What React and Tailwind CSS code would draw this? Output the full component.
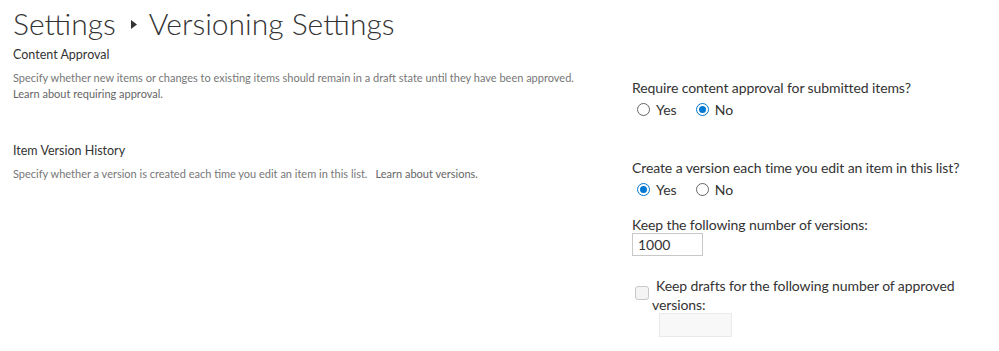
import React from "react";

const Radio = ({ checked, label }) => (
  <label className="flex items-center gap-[6px] text-[14px] text-[#333]">
    {checked ? (
      <span className="flex h-[13px] w-[13px] items-center justify-center rounded-full border border-[#0078d4]">
        <span className="h-[7px] w-[7px] rounded-full bg-[#0078d4]" />
      </span>
    ) : (
      <span className="h-[13px] w-[13px] rounded-full border border-[#666]" />
    )}
    <span>{label}</span>
  </label>
);

const SectionInfo = ({ title, children }) => (
  <div className="w-[619px] shrink-0">
    <h2 className="text-[12.5px] leading-[20px] text-[#333]">{title}</h2>
    <div className="mt-[5px] text-[11px] leading-[16px] text-[#777]">{children}</div>
  </div>
);

export default function App() {
  return (
    <div className="h-[351px] w-[999px] overflow-hidden bg-white pl-[13px] font-['Lato',sans-serif] text-[#333]">
      <h1 className="flex items-center pt-[3px] text-[30px] font-light leading-[40px] text-[#333]">
        <span>Settings</span>
        <svg className="ml-[15px] mr-[12px] mt-[2px]" width="6" height="9" viewBox="0 0 6 9">
          <path d="M0 0 L6 4.5 L0 9 Z" fill="#333" />
        </svg>
        <span>Versioning Settings</span>
      </h1>

      <div className="mt-[2px] flex">
        <SectionInfo title="Content Approval">
          <p>
            Specify whether new items or changes to existing items should remain in a draft state until they have been approved.
          </p>
          <a className="text-[#666]">Learn about requiring approval.</a>
        </SectionInfo>
        <div className="pt-[33px]">
          <p className="text-[14px] leading-[20px] tracking-[-0.1px]">Require content approval for submitted items?</p>
          <div className="mt-[1px] flex gap-[19px] pl-[5px]">
            <Radio label="Yes" />
            <Radio checked label="No" />
          </div>
        </div>
      </div>

      <div className="mt-[21px] flex">
        <SectionInfo title="Item Version History">
          <p>
            Specify whether a version is created each time you edit an item in this list.
            <a className="ml-[8px] text-[#666]">Learn about versions.</a>
          </p>
        </SectionInfo>
        <div className="pt-[17px]">
          <p className="text-[14px] leading-[20px] tracking-[-0.1px]">Create a version each time you edit an item in this list?</p>
          <div className="mt-[1px] flex gap-[19px] pl-[5px]">
            <Radio checked label="Yes" />
            <Radio label="No" />
          </div>
          <p className="mt-[17px] text-[14px] leading-[16px] tracking-[-0.1px]">Keep the following number of versions:</p>
          <div className="flex h-[23px] w-[71px] items-center border border-[#c8c8c8] px-[5px] text-[14px]">1000</div>
          <div className="mt-[20px] flex gap-[7px] pl-[3px]">
            <span className="mt-[10px] h-[14px] w-[14px] shrink-0 rounded-[3px] border border-[#c8c8c8] bg-[#f4f4f4]" />
            <div className="text-[14px] leading-[19px] tracking-[-0.1px]">
              <p>Keep drafts for the following number of approved</p>
              <p className="-ml-[4px]">versions:</p>
              <div className="-mt-[1px] ml-[3px] h-[24px] w-[73px] border border-[#eaeaea] bg-[#f8f8f8]" />
            </div>
          </div>
        </div>
      </div>
    </div>
  );
}
